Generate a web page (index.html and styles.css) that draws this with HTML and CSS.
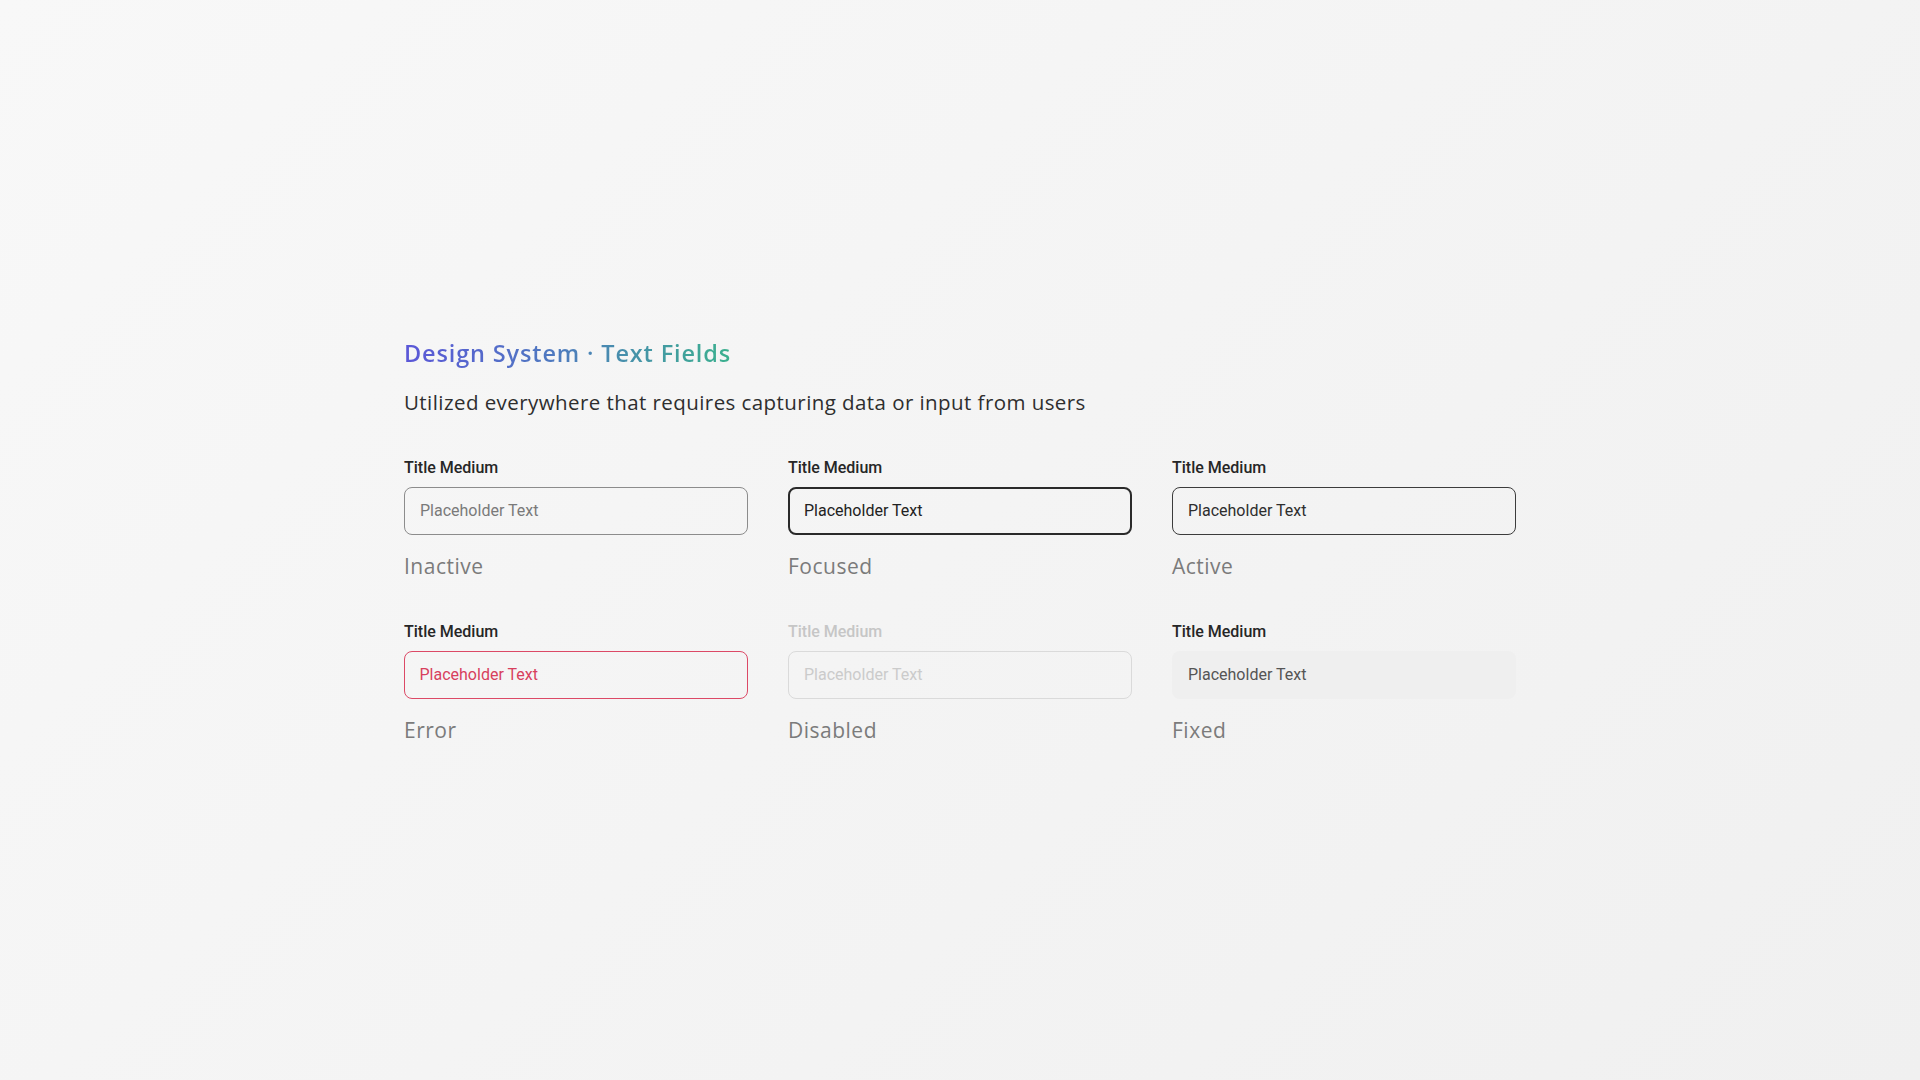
FILE: index.html
```html
<!DOCTYPE html>
<html lang="en">
<head>
<meta charset="utf-8">
<title>Design System · Text Fields</title>
<link rel="stylesheet" href="styles.css">
</head>
<body>
<main class="page">
  <h1 class="title">Design System · Text Fields</h1>
  <p class="subtitle">Utilized everywhere that requires capturing data or input from users</p>
  <section class="grid">
    <div class="field">
      <div class="label">Title Medium</div>
      <div class="box box-inactive">Placeholder Text</div>
      <div class="state">Inactive</div>
    </div>
    <div class="field">
      <div class="label">Title Medium</div>
      <div class="box box-focused">Placeholder Text</div>
      <div class="state">Focused</div>
    </div>
    <div class="field">
      <div class="label">Title Medium</div>
      <div class="box box-active">Placeholder Text</div>
      <div class="state">Active</div>
    </div>
    <div class="field">
      <div class="label">Title Medium</div>
      <div class="box box-error">Placeholder Text</div>
      <div class="state">Error</div>
    </div>
    <div class="field">
      <div class="label label-disabled">Title Medium</div>
      <div class="box box-disabled">Placeholder Text</div>
      <div class="state">Disabled</div>
    </div>
    <div class="field">
      <div class="label">Title Medium</div>
      <div class="box box-fixed">Placeholder Text</div>
      <div class="state">Fixed</div>
    </div>
  </section>
</main>
</body>
</html>
```

FILE: styles.css
```css
html, body {
  margin: 0;
  padding: 0;
}

body {
  width: 1920px;
  height: 1080px;
  overflow: hidden;
  background: linear-gradient(135deg, #f8f8f8 0%, #f4f4f4 50%, #f0f0f0 100%);
  font-family: "Open Sans", "Liberation Sans", sans-serif;
}

.page {
  width: 1112px;
  margin: 0 auto;
  padding-top: 337px;
}

.title {
  margin: 0;
  font-family: "Open Sans", sans-serif;
  font-weight: 600;
  font-size: 23.5px;
  line-height: 32px;
  letter-spacing: 0.85px;
  display: inline-block;
  background: linear-gradient(90deg, #5b57d8 0%, #4f79c0 45%, #3bb08e 100%);
  -webkit-background-clip: text;
  background-clip: text;
  color: transparent;
}

.subtitle {
  margin: 19px 0 0;
  font-family: "Open Sans", sans-serif;
  font-size: 20.5px;
  line-height: 28px;
  color: #2e2e2e;
  letter-spacing: 0.43px;
}

.grid {
  margin-top: 41px;
  display: grid;
  grid-template-columns: repeat(3, 344px);
  column-gap: 40px;
  row-gap: 41px;
}

.field {
  display: flex;
  flex-direction: column;
}

.label {
  padding-top: 1px;
  font-family: Roboto, "Liberation Sans", sans-serif;
  font-weight: 500;
  font-size: 16px;
  line-height: 20px;
  color: #262626;
}

.label-disabled {
  color: #c6c6c6;
}

.box {
  box-sizing: border-box;
  margin-top: 9px;
  height: 48px;
  border-radius: 8px;
  display: flex;
  align-items: center;
  padding: 0 15px 1px;
  font-family: Roboto, "Liberation Sans", sans-serif;
  font-size: 16px;
  border: 1px solid transparent;
}

.box-inactive {
  border-color: #8c8c8c;
  color: #7a7a7a;
}

.box-focused {
  border: 2px solid #2a2a2a;
  padding: 0 14px 1px;
  color: #222;
}

.box-active {
  border-color: #3c3c3c;
  color: #2e2e2e;
}

.box-error {
  border: 1.5px solid #dc4966;
  padding: 0 14.5px 1px;
  color: #d8405d;
}

.box-disabled {
  border-color: #dadada;
  color: #cbcbcb;
}

.box-fixed {
  background: #efefef;
  color: #555;
}

.state {
  margin-top: 17px;
  font-family: "Open Sans", sans-serif;
  font-size: 21px;
  line-height: 28px;
  letter-spacing: 0.5px;
  color: #7b7b7b;
}
```
